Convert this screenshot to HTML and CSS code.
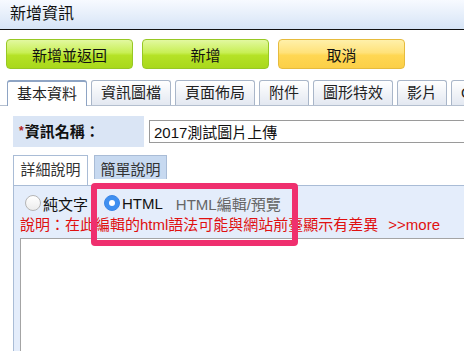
FILE: index.html
```html
<!DOCTYPE html>
<html lang="zh-Hant">
<head>
  <meta charset="UTF-8">
  <title>新增資訊</title>
  <link rel="stylesheet" href="styles.css">
</head>
<body>
  <div class="title-bar">新增資訊</div>

  <div class="actions">
    <button class="btn btn-green">新增並返回</button>
    <button class="btn btn-green">新增</button>
    <button class="btn btn-yellow">取消</button>
  </div>

  <ul class="tabs">
    <li class="tab active">基本資料</li>
    <li class="tab">資訊圖檔</li>
    <li class="tab">頁面佈局</li>
    <li class="tab">附件</li>
    <li class="tab">圖形特效</li>
    <li class="tab">影片</li>
    <li class="tab">OG設定</li>
  </ul>

  <div class="form-row">
    <div class="field-label"><span class="req">*</span>資訊名稱：</div>
    <input class="field-input" type="text" value="2017測試圖片上傳">
  </div>

  <ul class="subtabs">
    <li class="subtab active">詳細說明</li>
    <li class="subtab">簡單說明</li>
  </ul>

  <div class="panel">
    <div class="mode-row">
      <label class="mode"><span class="radio"></span>純文字</label>
      <label class="mode"><span class="radio checked"></span>HTML</label>
      <span class="mode-hint">HTML編輯/預覽</span>
    </div>
    <p class="note">說明：在此編輯的html語法可能與網站前臺顯示有差異<a class="more">&gt;&gt;more</a></p>
    <div class="editor"></div>
  </div>

  <div class="highlight"></div>
</body>
</html>
```

FILE: styles.css
```css
* { box-sizing: border-box; margin: 0; padding: 0; }
body {
  font-family: 'Liberation Sans', 'Noto Sans CJK TC', sans-serif;
  font-size: 15px;
  color: #111;
  background: #fff;
  width: 464px;
  height: 351px;
  overflow: hidden;
  position: relative;
}
ul { list-style: none; }

.title-bar {
  height: 30px;
  line-height: 28px;
  padding-left: 10px;
  font-size: 16px;
  background: linear-gradient(#f7faff, #d6e4f6);
  border-bottom: 1px solid #111;
}

.actions {
  display: flex;
  gap: 9px;
  padding: 9px 0 0 6px;
}
.btn {
  width: 127px;
  height: 30px;
  font-family: inherit;
  font-size: 15px;
  color: #111;
  border-radius: 4px;
  cursor: pointer;
}
.btn-green {
  border: 1px solid #97c824;
  background: linear-gradient(#e2f8a0 0%, #c8ef55 45%, #b5e226 55%, #a9d81c 100%);
}
.btn-yellow {
  border: 1px solid #e6bb3d;
  background: linear-gradient(#fff0aa 0%, #ffe27a 45%, #ffd753 55%, #fbcf48 100%);
}

.tabs {
  display: flex;
  align-items: flex-end;
  gap: 4px;
  margin-top: 11px;
  padding-left: 7px;
  height: 26px;
  border-bottom: 1px solid #b4bfcf;
  white-space: nowrap;
}
.tab {
  height: 25px;
  line-height: 23px;
  padding: 0 9px;
  border: 1px solid #a9b6c9;
  border-bottom: none;
  border-radius: 3px 3px 0 0;
  background: linear-gradient(#ffffff, #e3e8f1);
  color: #222;
}
.tab.active {
  height: 26px;
  margin-bottom: -1px;
  background: #fff;
  border-color: #8ea4c4;
  border-top: 2px solid #8ea4c4;
}

.form-row {
  display: flex;
  align-items: center;
  gap: 5px;
  margin-top: 10px;
  padding-left: 13px;
  white-space: nowrap;
}
.field-label {
  flex: none;
  width: 131px;
  height: 31px;
  line-height: 31px;
  padding-left: 6px;
  background: #dae5f5;
  font-weight: bold;
}
.req {
  color: #b52020;
  font-size: 12px;
  vertical-align: 2px;
  margin-right: 1px;
}
.field-input {
  flex: none;
  width: 360px;
  height: 23px;
  padding: 0 4px;
  border: 1px solid #9a9a9a;
  font-family: inherit;
  font-size: 15px;
  color: #111;
}

.subtabs {
  display: flex;
  align-items: flex-start;
  gap: 6px;
  margin-top: 8px;
  padding-left: 13px;
  height: 30px;
}
.subtab {
  width: 73px;
  height: 24px;
  line-height: 27px;
  text-align: center;
  background: #c7d9f0;
  border: 1px solid #a9bcd6;
  border-bottom: none;
  color: #333;
}
.subtab.active {
  width: 75px;
  height: 30px;
  background: #fff;
  position: relative;
  z-index: 1;
}

.panel {
  margin-left: 13px;
  padding: 7px 0 0 6px;
  background: #e4edfb;
  border-left: 1px solid #a9bcd6;
  border-top: 1px solid #a9bcd6;
}
.mode-row {
  display: flex;
  align-items: center;
  height: 20px;
  margin-bottom: 3px;
  padding-left: 5px;
}
.mode {
  display: flex;
  align-items: center;
  gap: 2px;
}
.mode + .mode { margin-left: 16px; }
.radio {
  width: 16px;
  height: 16px;
  border-radius: 50%;
  border: 1px solid #b5b5b5;
  background: linear-gradient(#ffffff, #ececec);
  position: relative;
}
.radio.checked {
  border-color: #3b86e6;
  background: #3f8ff0;
}
.radio.checked::after {
  content: '';
  position: absolute;
  left: 4px;
  top: 4px;
  width: 6px;
  height: 6px;
  border-radius: 50%;
  background: #fff;
}
.mode-hint {
  margin-left: 13px;
  color: #666;
}
.note {
  color: #e01010;
  line-height: 18px;
  white-space: nowrap;
}
.more { margin-left: 10px; }
.editor {
  margin-top: 4px;
  height: 130px;
  background: #fff;
  border: 1px solid #a4a4a4;
  border-right: none;
}

.highlight {
  position: absolute;
  left: 91px;
  top: 183px;
  width: 207px;
  height: 63px;
  border: 6px solid #ef2f6e;
  border-radius: 4px;
}
```
